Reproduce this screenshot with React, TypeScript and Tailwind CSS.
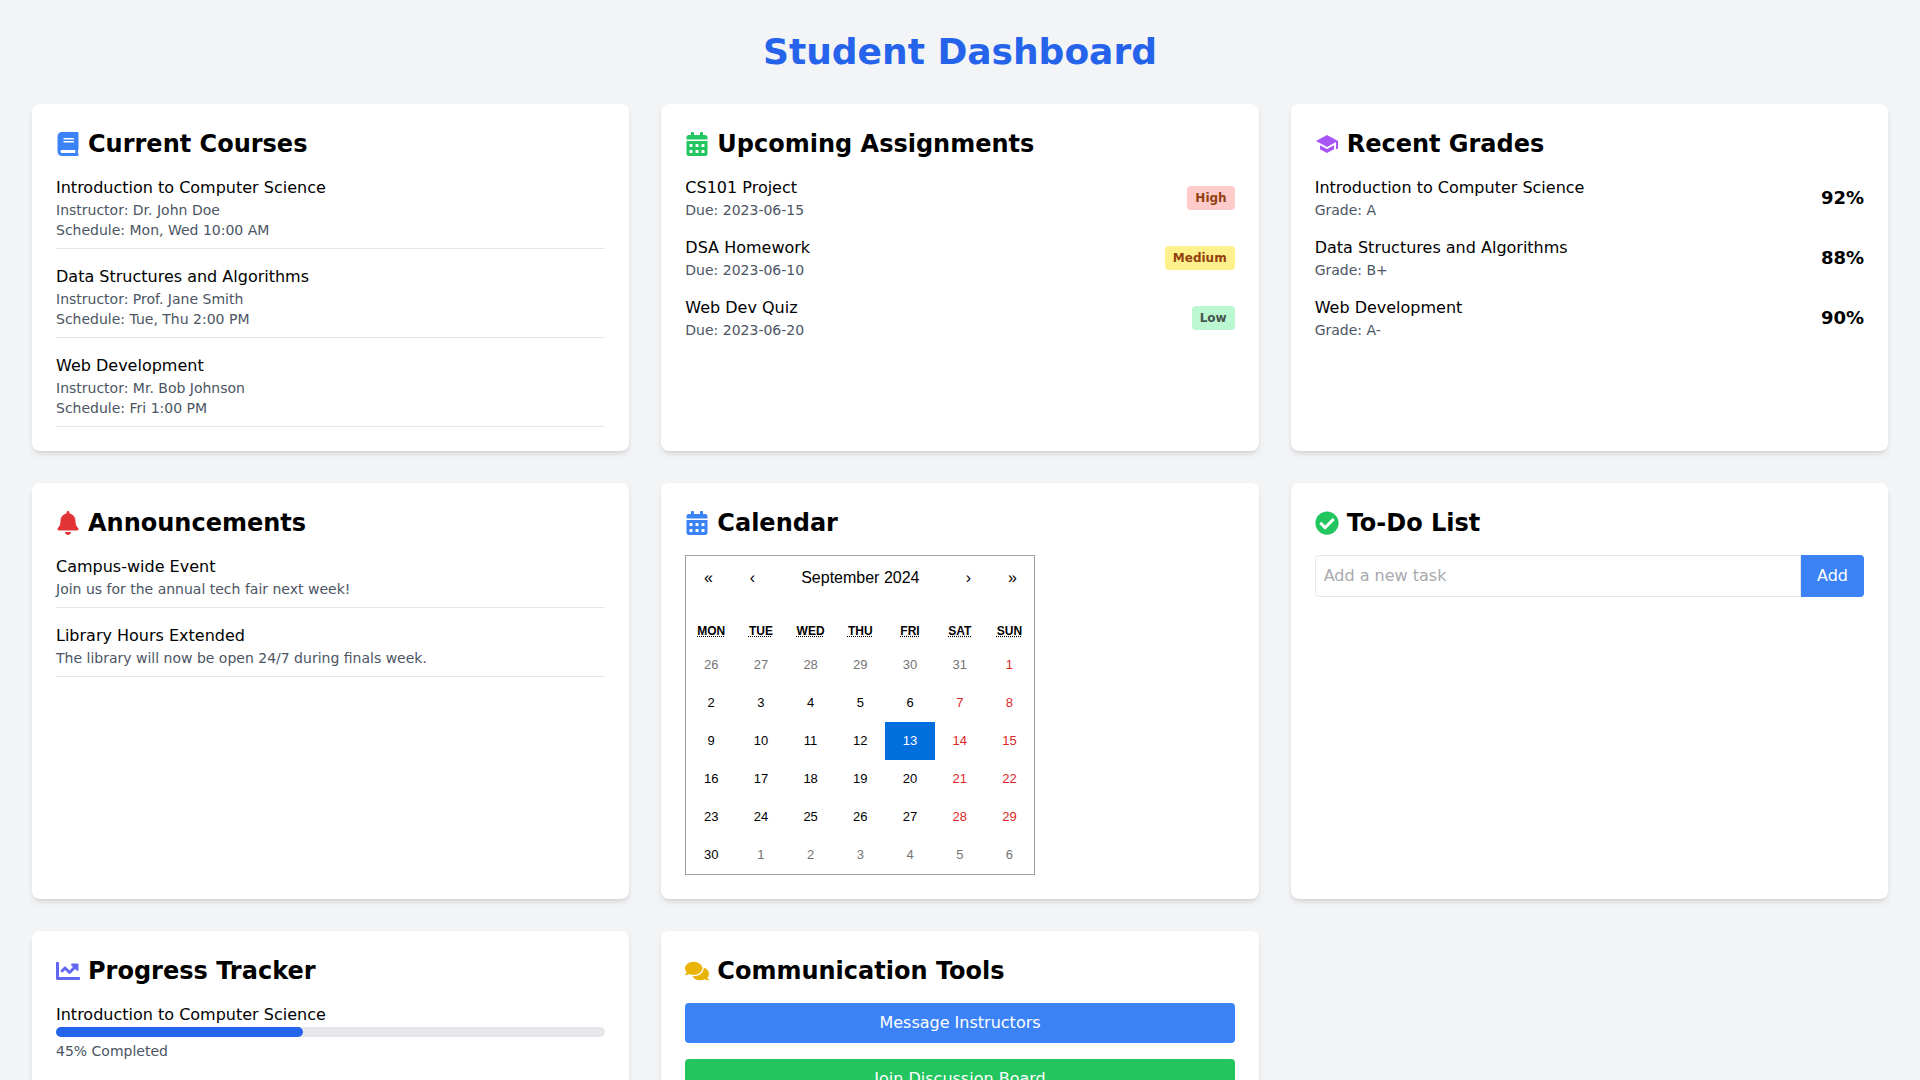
import { useState } from "react";
import type { FormEvent, ReactNode } from "react";
import {
  FaBell,
  FaBook,
  FaCalendarAlt,
  FaChartLine,
  FaCheckCircle,
  FaComments,
} from "react-icons/fa";
import { MdSchool } from "react-icons/md";
import { clsx } from "clsx";

const courses = [
  { name: "Introduction to Computer Science", instructor: "Dr. John Doe", schedule: "Mon, Wed 10:00 AM" },
  { name: "Data Structures and Algorithms", instructor: "Prof. Jane Smith", schedule: "Tue, Thu 2:00 PM" },
  { name: "Web Development", instructor: "Mr. Bob Johnson", schedule: "Fri 1:00 PM" },
];

const assignments = [
  { title: "CS101 Project", due: "2023-06-15", priority: "High" },
  { title: "DSA Homework", due: "2023-06-10", priority: "Medium" },
  { title: "Web Dev Quiz", due: "2023-06-20", priority: "Low" },
];

const priorityStyles: Record<string, string> = {
  High: "bg-[#fecaca] text-[#92400e]",
  Medium: "bg-[#fef08a] text-[#92400e]",
  Low: "bg-[#bbf7d0] text-[#475550]",
};

const grades = [
  { course: "Introduction to Computer Science", grade: "A", percentage: 92 },
  { course: "Data Structures and Algorithms", grade: "B+", percentage: 88 },
  { course: "Web Development", grade: "A-", percentage: 90 },
];

const announcements = [
  { title: "Campus-wide Event", content: "Join us for the annual tech fair next week!" },
  { title: "Library Hours Extended", content: "The library will now be open 24/7 during finals week." },
];

const progress = [{ course: "Introduction to Computer Science", completed: 45 }];

export default function App() {
  return (
    <div className="min-h-screen bg-[#f3f4f6] p-8 font-['DejaVu_Sans',sans-serif] text-black">
      <h1 className="mb-8 text-center text-4xl font-bold text-[#2563eb]">Student Dashboard</h1>

      <div className="grid grid-cols-1 gap-8 md:grid-cols-2 lg:grid-cols-3">
        <Card title="Current Courses" icon={<FaBook className="text-[#3b82f6]" />}>
          <ul className="space-y-4">
            {courses.map((course) => (
              <li key={course.name} className="border-b border-[#e5e7eb] pb-2">
                <h3>{course.name}</h3>
                <p className="text-sm text-[#4b5563]">Instructor: {course.instructor}</p>
                <p className="text-sm text-[#4b5563]">Schedule: {course.schedule}</p>
              </li>
            ))}
          </ul>
        </Card>

        <Card title="Upcoming Assignments" icon={<FaCalendarAlt className="text-[#22c55e]" />}>
          <ul className="space-y-4">
            {assignments.map((item) => (
              <li key={item.title} className="flex items-center justify-between">
                <div>
                  <h3>{item.title}</h3>
                  <p className="text-sm text-[#4b5563]">Due: {item.due}</p>
                </div>
                <span className={clsx("rounded px-2 py-1 text-xs font-bold", priorityStyles[item.priority])}>
                  {item.priority}
                </span>
              </li>
            ))}
          </ul>
        </Card>

        <Card title="Recent Grades" icon={<MdSchool className="text-[#a855f7]" />}>
          <ul className="space-y-4">
            {grades.map((item) => (
              <li key={item.course} className="flex items-center justify-between">
                <div>
                  <h3>{item.course}</h3>
                  <p className="text-sm text-[#4b5563]">Grade: {item.grade}</p>
                </div>
                <span className="text-lg font-bold">{item.percentage}%</span>
              </li>
            ))}
          </ul>
        </Card>

        <Card title="Announcements" icon={<FaBell className="text-[#e23434]" />}>
          <ul className="space-y-4">
            {announcements.map((item) => (
              <li key={item.title} className="border-b border-[#e5e7eb] pb-2">
                <h3>{item.title}</h3>
                <p className="text-sm text-[#4b5563]">{item.content}</p>
              </li>
            ))}
          </ul>
        </Card>

        <Card title="Calendar" icon={<FaCalendarAlt className="text-[#3b82f6]" />}>
          <Calendar />
        </Card>

        <Card title="To-Do List" icon={<FaCheckCircle className="text-[#22c55e]" />}>
          <TodoList />
        </Card>

        <Card title="Progress Tracker" icon={<FaChartLine className="text-[#6366f1]" />}>
          <ul className="space-y-4">
            {progress.map((item) => (
              <li key={item.course}>
                <h3>{item.course}</h3>
                <div className="h-2.5 w-full rounded-full bg-[#e5e7eb]">
                  <div className="h-2.5 rounded-full bg-[#2563eb]" style={{ width: `${item.completed}%` }} />
                </div>
                <p className="mt-1 text-sm text-[#4b5563]">{item.completed}% Completed</p>
              </li>
            ))}
          </ul>
        </Card>

        <Card title="Communication Tools" icon={<FaComments className="text-[#eab308]" />}>
          <div className="space-y-4">
            <button type="button" className="w-full rounded bg-[#3b82f6] px-4 py-2 text-white hover:bg-[#2563eb]">
              Message Instructors
            </button>
            <button type="button" className="w-full rounded bg-[#22c55e] px-4 py-2 text-white hover:bg-[#16a34a]">
              Join Discussion Board
            </button>
          </div>
        </Card>
      </div>
    </div>
  );
}

function Card({ title, icon, children }: { title: string; icon: ReactNode; children: ReactNode }) {
  return (
    <section className="rounded-lg bg-white p-6 shadow-md">
      <h2 className="mb-4 flex items-center gap-2 text-2xl font-bold">
        {icon}
        {title}
      </h2>
      {children}
    </section>
  );
}

const weekdays = [
  { short: "Mon", long: "Monday" },
  { short: "Tue", long: "Tuesday" },
  { short: "Wed", long: "Wednesday" },
  { short: "Thu", long: "Thursday" },
  { short: "Fri", long: "Friday" },
  { short: "Sat", long: "Saturday" },
  { short: "Sun", long: "Sunday" },
];

function Calendar() {
  const [month, setMonth] = useState(new Date(2024, 8, 1));
  const [selected, setSelected] = useState(new Date(2024, 8, 13));

  function move(months: number) {
    setMonth(new Date(month.getFullYear(), month.getMonth() + months, 1));
  }

  // weeks start on Monday
  const offset = (month.getDay() + 6) % 7;
  const daysInMonth = new Date(month.getFullYear(), month.getMonth() + 1, 0).getDate();
  const cells = Math.ceil((offset + daysInMonth) / 7) * 7;
  const days = Array.from(
    { length: cells },
    (_, i) => new Date(month.getFullYear(), month.getMonth(), i - offset + 1)
  );

  return (
    <div className="w-[350px] max-w-full border border-[#a0a096] bg-white font-['Liberation_Sans',Arial,sans-serif] leading-[18px]">
      <div className="mb-4 flex h-11">
        <NavButton label="Previous year" onClick={() => move(-12)}>«</NavButton>
        <NavButton label="Previous month" onClick={() => move(-1)}>‹</NavButton>
        <button type="button" className="grow">
          {month.toLocaleDateString("en-US", { month: "long", year: "numeric" })}
        </button>
        <NavButton label="Next month" onClick={() => move(1)}>›</NavButton>
        <NavButton label="Next year" onClick={() => move(12)}>»</NavButton>
      </div>

      <div className="grid grid-cols-7 text-center text-xs leading-[18px] font-bold uppercase">
        {weekdays.map((day) => (
          <div key={day.short} className="py-1.5">
            <abbr title={day.long}>{day.short}</abbr>
          </div>
        ))}
      </div>

      <div className="grid grid-cols-7 text-[13px]">
        {days.map((day) => {
          const active = day.getTime() === selected.getTime();
          const outside = day.getMonth() !== month.getMonth();
          const weekend = day.getDay() === 0 || day.getDay() === 6;
          return (
            <button
              key={day.getTime()}
              type="button"
              aria-pressed={active}
              onClick={() => setSelected(day)}
              className={clsx(
                "py-2.5",
                active && "bg-[#006edc] text-white",
                !active && outside && "text-[#757575]",
                !active && !outside && weekend && "text-[#dc2626]"
              )}
            >
              {day.getDate()}
            </button>
          );
        })}
      </div>
    </div>
  );
}

function NavButton({ label, onClick, children }: { label: string; onClick: () => void; children: ReactNode }) {
  return (
    <button type="button" aria-label={label} onClick={onClick} className="w-11">
      {children}
    </button>
  );
}

function TodoList() {
  const [tasks, setTasks] = useState<string[]>([]);
  const [task, setTask] = useState("");

  function handleSubmit(e: FormEvent) {
    e.preventDefault();
    if (!task.trim()) return;
    setTasks([...tasks, task]);
    setTask("");
  }

  return (
    <>
      <form onSubmit={handleSubmit} className="flex">
        <input
          type="text"
          aria-label="New task"
          value={task}
          onChange={(e) => setTask(e.target.value)}
          placeholder="Add a new task"
          className="min-w-0 grow rounded-l border border-[#e5e7eb] p-2 placeholder:text-[#a8a9ad]"
        />
        <button type="submit" className="rounded-r bg-[#3b82f6] px-4 py-2 text-white hover:bg-[#2563eb]">
          Add
        </button>
      </form>
      {tasks.length > 0 && (
        <ul className="mt-4 space-y-2">
          {tasks.map((item, i) => (
            <li key={i}>{item}</li>
          ))}
        </ul>
      )}
    </>
  );
}
